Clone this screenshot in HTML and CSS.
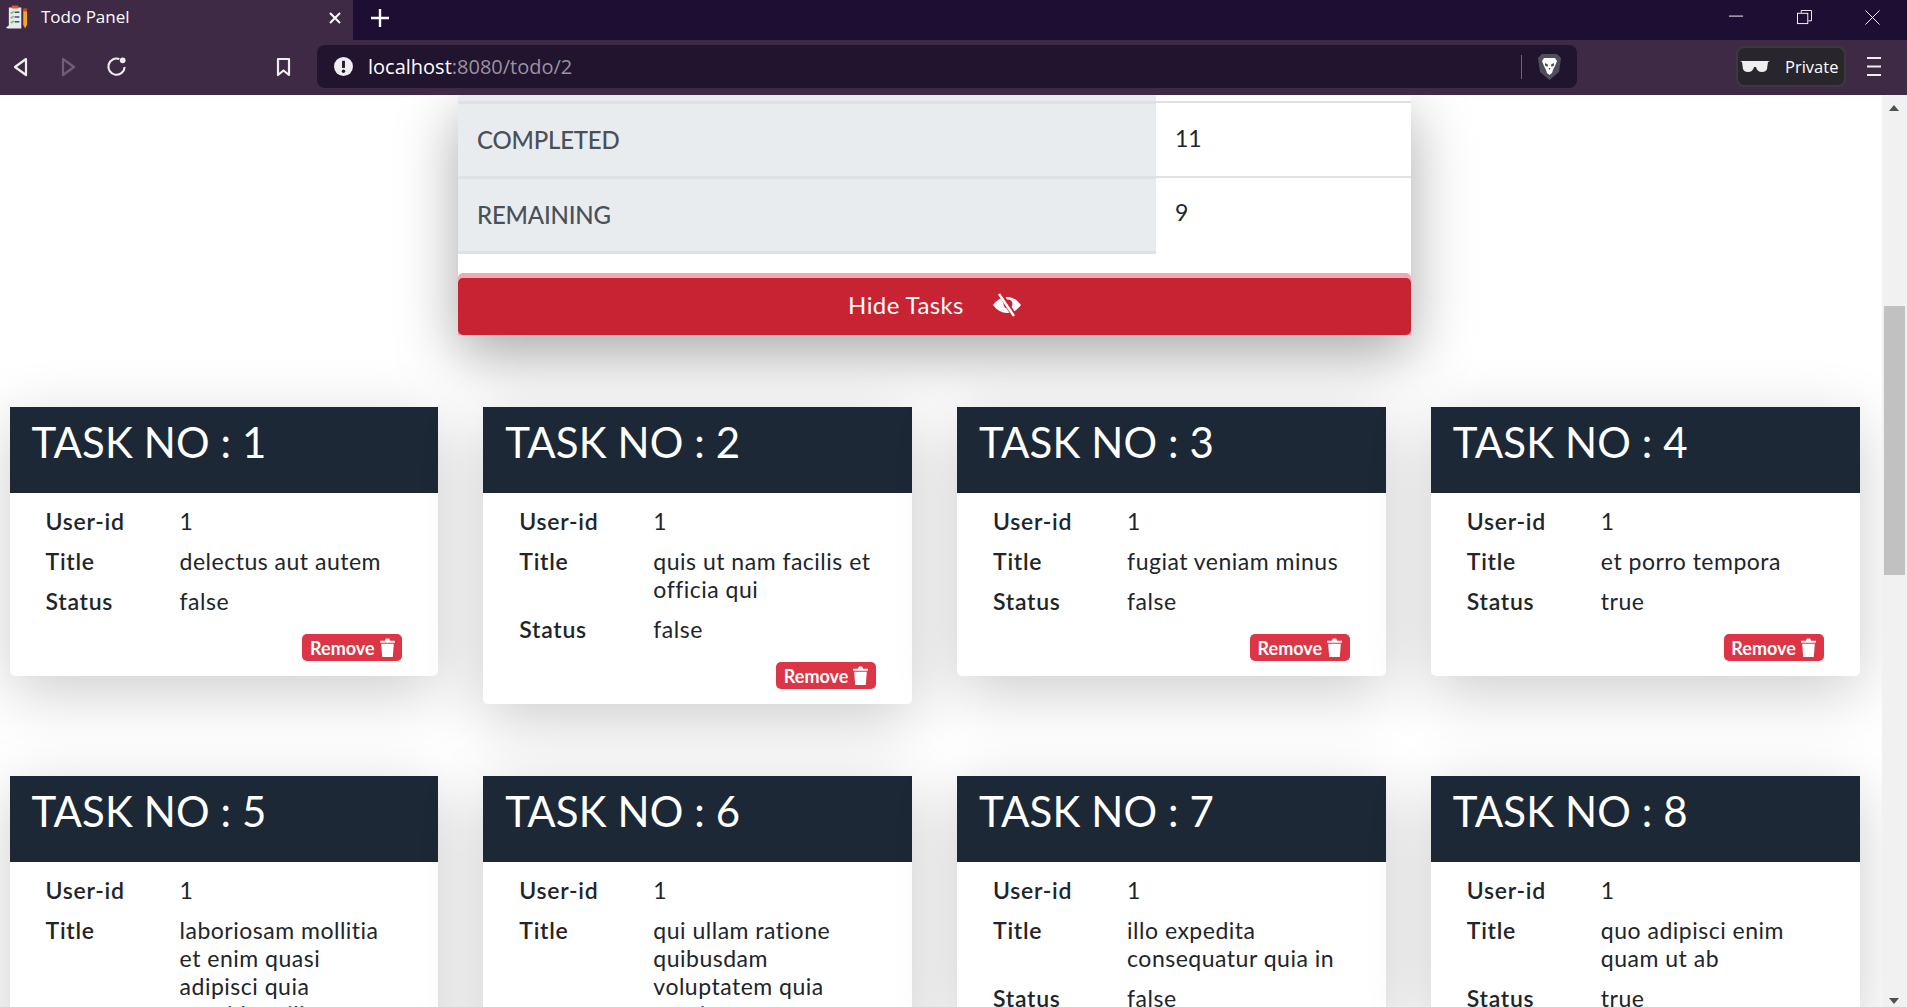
FILE: index.html
```html
<!DOCTYPE html>
<html lang="en">
<head>
<meta charset="UTF-8" />
<title>Todo Panel</title>
<link rel="stylesheet" href="styles.css">
</head>

<body>
<div class="browser">
	<div class="tabstrip">
		<div class="tab">
			<svg class="favicon" viewBox="0 0 24 26">
				<path d="M1 24 L4 22 V3 H17 V25 H3 Z" fill="#e6ebf2"/>
				<rect x="7" y="1" width="7" height="3" rx="1" fill="#e8552c"/>
				<path d="M6 8 l1 1 l2 -2 M6 13 l1 1 l2 -2 M6 18 l1 1 l2 -2" stroke="#7cc242" stroke-width="1.5" fill="none"/>
				<path d="M10 8 h5 M10 13 h5 M10 18 h5" stroke="#44506a" stroke-width="1.5"/>
				<rect x="19" y="4" width="4" height="3" fill="#d9431e"/>
				<path d="M19 7 h4 v14 l-2 4 l-2 -4 Z" fill="#f5a623"/>
			</svg>
			<span class="tab-title">Todo Panel</span>
			<svg class="tab-close" viewBox="0 0 12 12"><path d="M1 1 L11 11 M11 1 L1 11" stroke="#fff" stroke-width="2"/></svg>
		</div>
		<svg class="new-tab" viewBox="0 0 18 18"><path d="M9 0 V18 M0 9 H18" stroke="#fff" stroke-width="2.4"/></svg>
		<div class="win-controls">
			<svg viewBox="0 0 16 16"><path d="M0 6.5 H15" stroke="#fff"/></svg>
			<svg viewBox="0 0 16 16" fill="none" stroke="#fff"><path d="M4.5 3 V.5 H15.5 V11.5 H12"/><rect x=".5" y="3.5" width="11" height="11"/></svg>
			<svg viewBox="0 0 16 16"><path d="M.5 .5 L15.5 15.5 M15.5 .5 L.5 15.5" stroke="#fff"/></svg>
		</div>
	</div>

	<div class="toolbar">
		<svg class="tool-icon back" viewBox="0 0 15 20"><path d="M13 2 L2 10 L13 18 Z" fill="none" stroke="#eee" stroke-width="2.2" stroke-linejoin="round"/></svg>
		<svg class="tool-icon forward" viewBox="0 0 15 20"><path d="M2 2 L13 10 L2 18 Z" fill="none" stroke="#6f5f74" stroke-width="2.2" stroke-linejoin="round"/></svg>
		<svg class="tool-icon reload" viewBox="0 0 22 22"><path d="M14 3.2 A8.5 8.5 0 1 0 19.5 11.5" fill="none" stroke="#eee" stroke-width="2.2"/><circle cx="17.5" cy="4.5" r="3" fill="#eee"/></svg>
		<svg class="tool-icon bookmark" viewBox="0 0 15 20"><path d="M2 2 H13 V18 L7.5 13.5 L2 18 Z" fill="none" stroke="#eee" stroke-width="2.2" stroke-linejoin="round"/></svg>
		<div class="urlbar">
			<svg class="info" viewBox="0 0 20 20"><circle cx="10" cy="10" r="10" fill="#eee"/><path d="M10 4 V11.5" stroke="#21142f" stroke-width="3"/><circle cx="10" cy="15" r="1.8" fill="#21142f"/></svg>
			<span class="url"><span class="url-host">localhost</span>:8080/todo/2</span>
			<span class="url-sep"></span>
			<svg class="shield" viewBox="0 0 23 27">
				<path d="M4 1 H19 L23 5 L21 19 L11.5 27 L2 19 L0 5 Z" fill="#4f4f5c"/>
				<path d="M6 5 H17 L19 8 L17 13 L15 17 L14 20 L11.5 22 L9 20 L8 17 L6 13 L4 8 Z" fill="#fff"/>
				<path d="M7 10 L10 11.5 L9.5 14 L7 12.5 Z M16 10 L13 11.5 L13.5 14 L16 12.5 Z M10.5 15 H12.5 L11.5 17 Z" fill="#4f4f5c"/>
			</svg>
		</div>
		<div class="private">
			<svg class="glasses" viewBox="0 0 30 11"><path d="M0 0 H30 L28 1 L27 8 Q26 11 22 11 Q17 11 16 6 H14 Q13 11 8 11 Q4 11 3 8 L2 1 Z" fill="#eee"/></svg>
			<span>Private</span>
		</div>
		<svg class="tool-icon menu" viewBox="0 0 14 19"><path d="M0 1 H14 M0 9.5 H14 M0 18 H14" stroke="#eee" stroke-width="2"/></svg>
	</div>

	<div class="viewport">
		<div class="page">
			<section class="summary">
				<div class="stat-row stub">
					<div class="stat-label"></div>
					<div class="stat-value"></div>
				</div>
				<div class="stat-row">
					<div class="stat-label">COMPLETED</div>
					<div class="stat-value">11</div>
				</div>
				<div class="stat-row">
					<div class="stat-label">REMAINING</div>
					<div class="stat-value last">9</div>
				</div>
				<div class="btn-ring">
					<button class="hide-btn">
						<span>Hide Tasks</span>
						<svg class="eye" viewBox="0 0 28 24">
							<path d="M0 12 Q6 4 14 4 Q22 4 28 12 Q22 20 14 20 Q6 20 0 12 Z" fill="#fff"/>
							<circle cx="15" cy="11" r="4.5" fill="#c82333"/>
							<path d="M7 0 L22 24" stroke="#c82333" stroke-width="5"/>
							<path d="M6 1 L21 23" stroke="#fff" stroke-width="2.4"/>
						</svg>
					</button>
				</div>
			</section>

			<section class="tasks">
				<article class="task">
					<h2 class="task-head">TASK NO : 1</h2>
					<div class="task-body">
						<div class="key">User-id</div><div class="val">1</div>
						<div class="key">Title</div><div class="val">delectus aut autem</div>
						<div class="key">Status</div><div class="val">false</div>
					</div>
					<div class="task-foot"><button class="remove">Remove <svg viewBox="0 0 14 18"><path d="M0 2.5 H4.5 L5.5 .5 H8.5 L9.5 2.5 H14 V4.5 H0 Z M1 5.5 H13 L12 18 H2 Z" fill="#fff"/></svg></button></div>
				</article>
				<article class="task">
					<h2 class="task-head">TASK NO : 2</h2>
					<div class="task-body">
						<div class="key">User-id</div><div class="val">1</div>
						<div class="key">Title</div><div class="val">quis ut nam facilis et officia qui</div>
						<div class="key">Status</div><div class="val">false</div>
					</div>
					<div class="task-foot"><button class="remove">Remove <svg viewBox="0 0 14 18"><path d="M0 2.5 H4.5 L5.5 .5 H8.5 L9.5 2.5 H14 V4.5 H0 Z M1 5.5 H13 L12 18 H2 Z" fill="#fff"/></svg></button></div>
				</article>
				<article class="task">
					<h2 class="task-head">TASK NO : 3</h2>
					<div class="task-body">
						<div class="key">User-id</div><div class="val">1</div>
						<div class="key">Title</div><div class="val">fugiat veniam minus</div>
						<div class="key">Status</div><div class="val">false</div>
					</div>
					<div class="task-foot"><button class="remove">Remove <svg viewBox="0 0 14 18"><path d="M0 2.5 H4.5 L5.5 .5 H8.5 L9.5 2.5 H14 V4.5 H0 Z M1 5.5 H13 L12 18 H2 Z" fill="#fff"/></svg></button></div>
				</article>
				<article class="task">
					<h2 class="task-head">TASK NO : 4</h2>
					<div class="task-body">
						<div class="key">User-id</div><div class="val">1</div>
						<div class="key">Title</div><div class="val">et porro tempora</div>
						<div class="key">Status</div><div class="val">true</div>
					</div>
					<div class="task-foot"><button class="remove">Remove <svg viewBox="0 0 14 18"><path d="M0 2.5 H4.5 L5.5 .5 H8.5 L9.5 2.5 H14 V4.5 H0 Z M1 5.5 H13 L12 18 H2 Z" fill="#fff"/></svg></button></div>
				</article>
				<article class="task">
					<h2 class="task-head">TASK NO : 5</h2>
					<div class="task-body">
						<div class="key">User-id</div><div class="val">1</div>
						<div class="key">Title</div><div class="val">laboriosam mollitia et enim quasi adipisci quia provident illum</div>
						<div class="key">Status</div><div class="val">false</div>
					</div>
				</article>
				<article class="task">
					<h2 class="task-head">TASK NO : 6</h2>
					<div class="task-body">
						<div class="key">User-id</div><div class="val">1</div>
						<div class="key">Title</div><div class="val">qui ullam ratione quibusdam voluptatem quia omnis</div>
						<div class="key">Status</div><div class="val">false</div>
					</div>
				</article>
				<article class="task">
					<h2 class="task-head">TASK NO : 7</h2>
					<div class="task-body">
						<div class="key">User-id</div><div class="val">1</div>
						<div class="key">Title</div><div class="val">illo expedita consequatur quia in</div>
						<div class="key">Status</div><div class="val">false</div>
					</div>
				</article>
				<article class="task">
					<h2 class="task-head">TASK NO : 8</h2>
					<div class="task-body">
						<div class="key">User-id</div><div class="val">1</div>
						<div class="key">Title</div><div class="val">quo adipisci enim quam ut ab</div>
						<div class="key">Status</div><div class="val">true</div>
					</div>
				</article>
			</section>
		</div>

		<div class="scrollbar">
			<span class="arrow up"></span>
			<div class="thumb"></div>
			<span class="arrow down"></span>
		</div>
	</div>
</div>
</body>

</html>
```

FILE: styles.css
```css
* {
	box-sizing: border-box;
}

html, body {
	margin: 0;
	height: 100%;
	overflow: hidden;
}

body {
	font-family: "Lato", "Open Sans", sans-serif;
	color: #212529;
	background-color: white;
}

.browser {
	display: flex;
	flex-direction: column;
	height: 100vh;
}

/* browser chrome */
.tabstrip {
	display: flex;
	align-items: center;
	height: 40px;
	flex: none;
	background-color: #1c0f33;
}

.tab {
	display: flex;
	align-items: center;
	flex: none;
	width: 353px;
	height: 40px;
	padding: 0 12px 6px 5px;
	background-color: #3e2a45;
}

.favicon {
	width: 23px;
	height: 26px;
}

.tab-title {
	margin: -2px 0 0 13px;
	font-family: "Open Sans", sans-serif;
	font-size: 17px;
	color: white;
	flex: 1;
}

.tab-close {
	width: 12px;
	height: 12px;
	margin-top: 2px;
}

.new-tab {
	width: 18px;
	height: 18px;
	margin: -4px 0 0 18px;
}

.win-controls {
	display: flex;
	gap: 53px;
	margin: -6px 27px 0 auto;
}

.win-controls svg {
	width: 15px;
	height: 15px;
}

.toolbar {
	display: flex;
	align-items: center;
	height: 55px;
	flex: none;
	padding-bottom: 2px;
	background-color: #3e2a45;
}

.tool-icon {
	flex: none;
	height: 20px;
}

.back {
	width: 15px;
	margin-left: 13px;
}

.forward {
	width: 15px;
	margin-left: 33px;
}

.reload {
	width: 21px;
	height: 21px;
	margin-left: 30px;
}

.bookmark {
	width: 15px;
	margin-left: 149px;
}

.urlbar {
	display: flex;
	align-items: center;
	width: 1260px;
	height: 43px;
	margin-left: 26px;
	padding-left: 17px;
	border-radius: 8px;
	background-color: #21142f;
}

.info {
	width: 19px;
	height: 19px;
}

.url {
	margin-left: 15px;
	font-family: "Open Sans", sans-serif;
	font-size: 20px;
	color: #9a93a0;
	flex: 1;
}

.url-host {
	color: white;
}

.url-sep {
	width: 1px;
	height: 24px;
	background-color: #6b6272;
}

.shield {
	width: 23px;
	height: 27px;
	margin: 0 16px;
}

.private {
	display: flex;
	align-items: center;
	width: 110px;
	height: 41px;
	margin-left: 159px;
	padding-left: 2px;
	border: 2px solid #3c3940;
	border-radius: 8px;
	font-family: "Open Sans", sans-serif;
	font-size: 16.5px;
	color: white;
	background-color: #29252d;
}

.glasses {
	width: 30px;
	height: 11px;
	margin-right: 15px;
}

.menu {
	width: 14px;
	height: 19px;
	margin-left: 21px;
}

/* page */
.viewport {
	display: flex;
	flex: 1;
	min-height: 0;
}

.page {
	flex: 1;
	min-width: 0;
	overflow: hidden;
	background-color: white;
}

.scrollbar {
	position: relative;
	width: 25px;
	flex: none;
	background-color: #f1f1f1;
}

.thumb {
	position: absolute;
	top: 211px;
	left: 2px;
	width: 21px;
	height: 269px;
	background-color: #c1c1c1;
}

.arrow {
	position: absolute;
	left: 7px;
	width: 0;
	height: 0;
	border-left: 5.5px solid transparent;
	border-right: 5.5px solid transparent;
}

.up {
	top: 10px;
	border-bottom: 6px solid #505050;
}

.down {
	bottom: 3px;
	border-top: 6px solid #505050;
}

.summary {
	width: 953px;
	margin-left: 458px;
	background-color: white;
	box-shadow: 0 20px 56px rgba(0, 0, 0, .34);
}

.stat-row {
	display: flex;
	height: 75px;
	font-size: 24px;
}

.stub {
	height: 9px;
}

.stat-label {
	display: flex;
	align-items: center;
	width: 698px;
	padding: 0 0 2px 19px;
	font-weight: 500;
	letter-spacing: -.2px;
	color: #495057;
	background-color: #e9ecef;
	border-bottom: 3px solid #dee2e6;
}

.stat-value {
	display: flex;
	align-items: center;
	flex: 1;
	height: 74px;
	padding: 0 0 5px 19px;
	font-size: 23px;
	border-bottom: 2px solid #dee2e6;
}

.stub .stat-value {
	height: 8px;
	padding: 0;
}

.stat-value.last {
	padding-bottom: 8px;
	border-bottom: none;
}

.btn-ring {
	margin-top: 19px;
	padding-top: 5px;
	border-radius: 5px 5px 0 0;
	background-color: #f0a9b0;
}

.hide-btn {
	display: flex;
	align-items: center;
	justify-content: center;
	gap: 29px;
	width: 100%;
	height: 57px;
	padding: 0 0 4px 0;
	border: none;
	border-radius: 5px;
	font-family: inherit;
	font-size: 24px;
	letter-spacing: .4px;
	color: white;
	background-color: #c82333;
}

.eye {
	width: 28px;
	height: 24px;
}

.tasks {
	display: grid;
	grid-template-columns: repeat(4, 1fr);
	align-items: start;
	column-gap: 45px;
	row-gap: 72px;
	margin-top: 72px;
	padding: 0 22.4px 40px 9.6px;
}

.task {
	border-radius: 5px;
	background-color: white;
	box-shadow: 0 16px 64px rgba(0, 0, 0, .2);
}

.task-head {
	height: 86px;
	margin: 0;
	padding: 5px 0 0 22px;
	font-size: 42px;
	font-weight: 400;
	letter-spacing: .1px;
	line-height: 60px;
	color: white;
	background-color: #1c2835;
}

.task-body {
	display: grid;
	grid-template-columns: 134px 1fr;
	padding: 8px 36px 0 36px;
	font-size: 23px;
	letter-spacing: .5px;
	line-height: 28px;
}

.key, .val {
	padding: 6px 0;
}

.key {
	font-weight: 600;
	letter-spacing: .7px;
}

.task-foot {
	display: flex;
	justify-content: flex-end;
	padding: 13px 36px 15px 0;
}

.remove {
	display: flex;
	align-items: center;
	justify-content: center;
	gap: 5px;
	width: 100px;
	height: 27px;
	padding: 0;
	border: none;
	border-radius: 5px;
	font-family: inherit;
	font-size: 18px;
	font-weight: 700;
	color: white;
	background-color: #dc3545;
}

.remove svg {
	width: 15px;
	height: 19px;
}
```
